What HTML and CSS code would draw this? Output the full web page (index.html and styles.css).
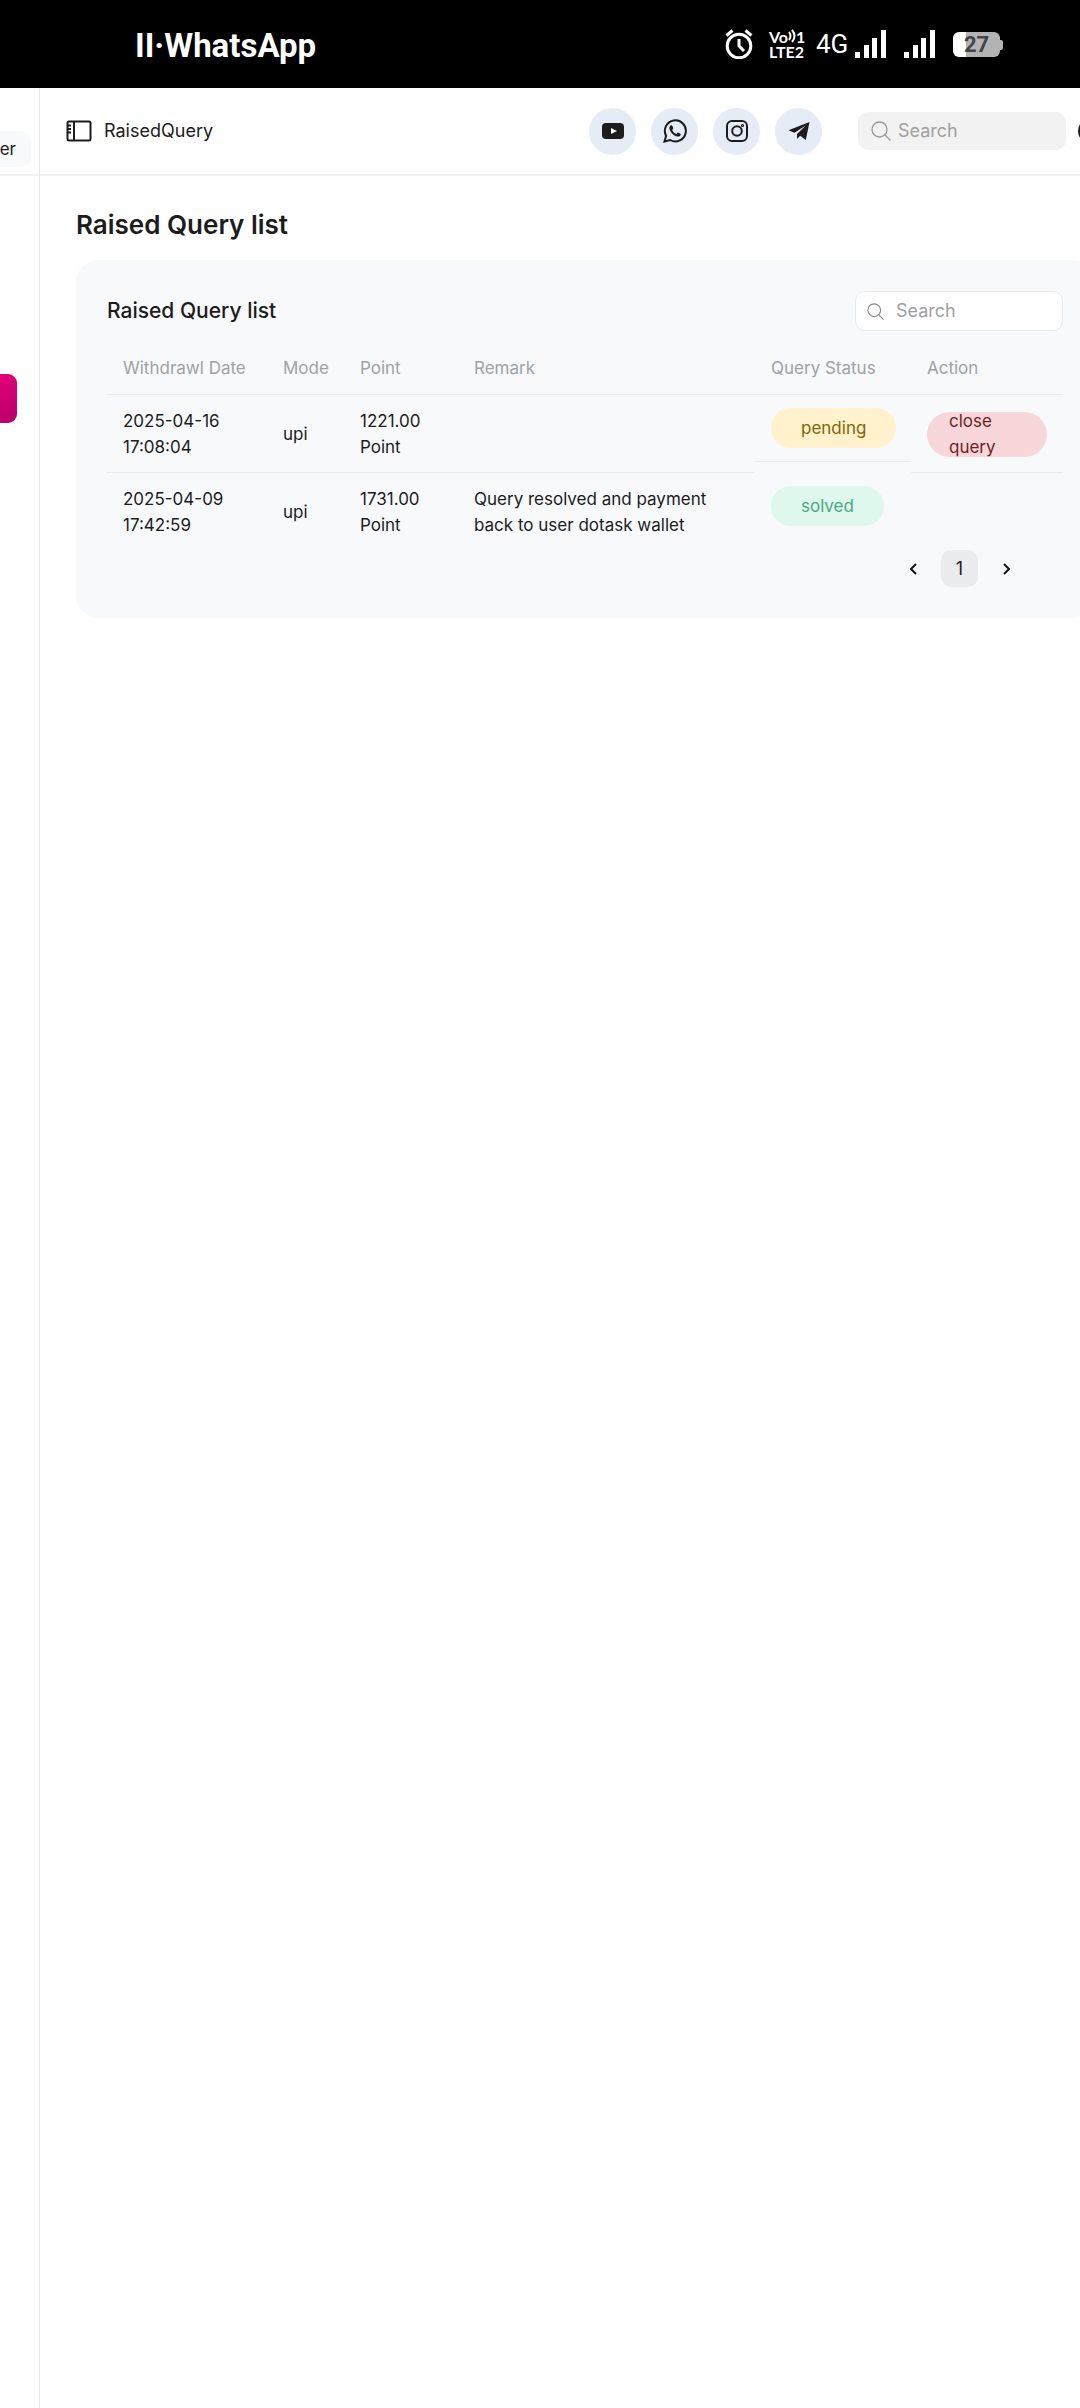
FILE: index.html
```html
<!DOCTYPE html>
<html lang="en">
<head>
<meta charset="utf-8">
<title>RaisedQuery</title>
<meta name="viewport" content="width=device-width, initial-scale=1">
<link rel="stylesheet" href="styles.css">
</head>
<body>
<div class="statusbar">
  <span class="carrier">II·WhatsApp</span>
  <div class="indicators">
    <svg class="alarm" viewBox="0 0 28 30" width="28" height="30" fill="none" stroke="#fff" stroke-width="3"><circle cx="14" cy="17" r="11.8"/><path d="M14 10v7l5 5M1.500 6.500l6-5M26.500 6.500l-6-5"/></svg>
    <div class="volte">
      <div class="volte-row"><span>Vo</span><svg viewBox="0 0 8 14" width="8" height="14" fill="none" stroke="#fff" stroke-width="2"><path d="M1 3q3 4 0 8M4 1q5 6 0 12"/></svg><span>1</span></div>
      <div class="volte-row"><span>LTE2</span></div>
    </div>
    <span class="network">4G</span>
    <svg class="signal" viewBox="0 0 32 28" width="32" height="28" fill="#fff"><path d="M0 22h5v6H0zM9 15h5v13H9zM17 8h5v20h-5zM26 0h5v28h-5z"/></svg>
    <svg class="signal second" viewBox="0 0 32 28" width="32" height="28" fill="#fff"><path d="M0 22h5v6H0zM9 15h5v13H9zM17 8h5v20h-5zM26 0h5v28h-5z"/></svg>
    <div class="battery"><span>27</span></div>
  </div>
</div>
<div class="app">
  <aside class="sidebar">
    <div class="sidebar-top"><a class="pill" href="#">Twitter</a></div>
    <a class="active-item" href="#" aria-label="Raised query"></a>
  </aside>
  <div class="main">
    <header class="topbar">
      <button class="icon-button" aria-label="Toggle sidebar"><svg viewBox="0 0 26 22" width="26" height="22" fill="none" stroke="#1c1c1c" stroke-width="2"><rect x="1.500" y="1.500" width="23" height="19" rx="1.500"/><path d="M8 1.500v19M2 5.500h3M2 9h3M2 12.500h3"/></svg></button>
      <span class="crumb">RaisedQuery</span>
      <nav class="social">
        <a href="#" aria-label="YouTube"><svg viewBox="0 0 24 24" width="24" height="24"><path fill="#1c1c1c" d="M5 4h14q4 0 4 4v8q0 4-4 4H5q-4 0-4-4V8q0-4 4-4z"/><path fill="#fff" d="M10 9l6 3-6 3z"/></svg></a>
        <a href="#" aria-label="WhatsApp"><svg viewBox="0 0 24 24" width="24" height="24"><path fill="none" stroke="#1c1c1c" stroke-width="2" d="M1.500 22.500l1.600-5.700A10.500 10.500 0 1 1 7.200 21z"/><path fill="#1c1c1c" d="M8.500 6.300c-.5-.3-1.200 0-1.600.6-2.300 3.600 3.300 10.200 7.700 10.700 1.700.1 3.300-1 3.200-2.600 0-.5-2.700-1.800-3.100-1.600l-1.300 1.500c-1.800-.6-3.600-2.200-4.200-4l1-1.400c.3-.5-.9-2.800-1.700-3.200z"/></svg></a>
        <a href="#" aria-label="Instagram"><svg viewBox="0 0 24 24" width="24" height="24" fill="none" stroke="#1c1c1c" stroke-width="2"><rect x="2" y="2" width="20" height="20" rx="5"/><circle cx="12" cy="12" r="4.800"/><circle cx="17.500" cy="6.500" r=".6"/></svg></a>
        <a href="#" aria-label="Telegram"><svg viewBox="0 0 24 24" width="24" height="24" fill="#1c1c1c"><path d="M22.500 3L1.500 11.200l6 2.500L19 6.200 10 15v5l3.200-3.300 5.600 4.300z"/></svg></a>
      </nav>
      <label class="search filled"><svg viewBox="0 0 20 20" width="20" height="20" fill="none" stroke="#999" stroke-width="1.300"><circle cx="8.500" cy="8.500" r="7.500"/><path d="M14 14l5.500 5.500"/></svg><input type="search" placeholder="Search" aria-label="Search site"></label>
      <button class="icon-button theme" aria-label="Theme"><svg viewBox="0 0 24 24" width="24" height="24" fill="none" stroke="#1c1c1c" stroke-width="2"><circle cx="12" cy="12" r="11"/></svg></button>
    </header>
    <main class="content">
      <h1>Raised Query list</h1>
      <section class="card">
        <div class="card-head">
          <h2>Raised Query list</h2>
          <label class="search outlined"><svg viewBox="0 0 20 20" width="17" height="17" fill="none" stroke="#888" stroke-width="1.300"><circle cx="8.500" cy="8.500" r="7.500"/><path d="M14 14l5.500 5.500"/></svg><input type="search" placeholder="Search" aria-label="Search queries"></label>
        </div>
        <table>
          <colgroup><col class="c-date"><col class="c-mode"><col class="c-point"><col><col class="c-status"><col class="c-action"></colgroup>
          <thead><tr><th>Withdrawl Date</th><th>Mode</th><th>Point</th><th>Remark</th><th>Query Status</th><th>Action</th></tr></thead>
          <tbody>
            <tr><td>2025-04-16 17:08:04</td><td>upi</td><td>1221.00 Point</td><td></td><td class="status"><div><span class="badge pending">pending</span></div></td><td class="action"><button class="close-query">close query</button></td></tr>
            <tr><td>2025-04-09 17:42:59</td><td>upi</td><td>1731.00 Point</td><td>Query resolved and payment back to user dotask wallet</td><td class="status"><div><span class="badge solved">solved</span></div></td><td></td></tr>
          </tbody>
        </table>
        <nav class="pager" aria-label="Pagination">
          <button aria-label="Previous page"><svg viewBox="0 0 8 12" width="8" height="12" fill="none" stroke="#111" stroke-width="2"><path d="M7 1L2 6l5 5"/></svg></button>
          <button class="current">1</button>
          <button aria-label="Next page"><svg viewBox="0 0 8 12" width="8" height="12" fill="none" stroke="#111" stroke-width="2"><path d="M1 1l5 5-5 5"/></svg></button>
        </nav>
      </section>
    </main>
  </div>
</div>
</body>
</html>
```
FILE: styles.css
```css
* { box-sizing: border-box; }
body {
  margin: 0;
  min-height: 100vh;
  display: flex;
  flex-direction: column;
  overflow-x: hidden;
  background: #fff;
  color: #1c1c1c;
  font: 17px/26px Inter, "Liberation Sans", sans-serif;
}
button, input { font: inherit; color: inherit; }
button { border: 0; background: none; padding: 0; }
a { color: inherit; text-decoration: none; }
svg { display: block; flex: none; }
h1, h2 { margin: 0; }

.statusbar {
  display: flex;
  justify-content: space-between;
  align-items: center;
  height: 88px;
  padding: 0 80px 0 135px;
  background: #000;
  color: #fff;
  font-family: Roboto, sans-serif;
}
.carrier { padding-top: 4px; font-size: 33px; line-height: 40px; font-weight: 700; }
.indicators { display: flex; align-items: center; }
.volte {
  margin: 0 11px 0 16px;
  width: 36px;
  font: 700 16px/15px Lato, sans-serif;
}
.volte-row { display: flex; justify-content: space-between; }
.network { width: 30px; margin-right: 9px; font-size: 26px; line-height: 32px; }
.second { margin-left: 17px; }
.battery {
  position: relative;
  width: 47px;
  height: 25px;
  margin-left: 17px;
  border-radius: 6px;
  background: linear-gradient(90deg, #fff 13px, #b3b3b3 13px);
  color: #444;
  font-size: 22px;
  line-height: 26px;
  font-weight: 700;
  text-align: center;
}
.battery::after {
  content: "";
  position: absolute;
  left: 100%;
  top: 8px;
  width: 3px;
  height: 10px;
  border-radius: 0 2px 2px 0;
  background: #b3b3b3;
}

.app { flex: 1; display: flex; }
.sidebar {
  flex: none;
  width: 40px;
  border-right: 1px solid #e8e8e8;
  overflow: hidden;
}
.sidebar-top {
  display: flex;
  justify-content: flex-end;
  align-items: flex-end;
  height: 88px;
  padding: 0 8px 7px 0;
  border-bottom: 2px solid #f2f2f2;
}
.pill {
  padding: 5px 15px;
  border-radius: 10px;
  background: #f7f9fb;
}
.active-item {
  display: block;
  height: 49px;
  margin: 198px 22px 0 -20px;
  border-radius: 9px;
  background: linear-gradient(165deg, #e6007a, #b8006b);
}

.main { flex: 1; min-width: 0; }
.topbar {
  display: flex;
  align-items: center;
  height: 88px;
  padding-left: 26px;
  border-bottom: 2px solid #f2f2f2;
}
.crumb { margin-left: 12px; font-size: 18px; }
.social { display: flex; gap: 15px; margin-left: auto; }
.social a {
  display: grid;
  place-items: center;
  width: 47px;
  height: 47px;
  border-radius: 50%;
  background: #e5ecf6;
}
.search { display: flex; align-items: center; border-radius: 10px; }
.search input {
  flex: 1;
  min-width: 0;
  padding: 0;
  border: 0;
  outline: 0;
  background: none;
  font-size: 18px;
}
.search input::placeholder { color: #a0a0a0; opacity: 1; }
.filled {
  width: 208px;
  height: 38px;
  margin-left: 36px;
  padding: 0 13px;
  gap: 7px;
  background: #f2f2f2;
}
.outlined {
  width: 208px;
  height: 40px;
  padding: 0 11px;
  gap: 12px;
  border: 1px solid #e9eaec;
  background: #fff;
}
.theme { flex: none; width: 24px; margin: 0 -22px 0 12px; }

.content { padding: 32px 0 32px 36px; }
h1 { font-size: 26px; line-height: 34px; font-weight: 600; }
h2 { font-size: 21px; line-height: 30px; font-weight: 500; }
.card {
  margin: 18px -14px 0 0;
  padding: 31px;
  border-radius: 22px;
  background: #f7f9fb;
}
.card-head {
  display: flex;
  justify-content: space-between;
  align-items: center;
}
table {
  width: 100%;
  margin-top: 11px;
  table-layout: fixed;
  border-collapse: collapse;
}
.c-date { width: 160px; }
.c-mode { width: 77px; }
.c-point { width: 114px; }
.c-status { width: 156px; }
.c-action { width: 152px; }
th {
  padding: 13px 16px;
  border-bottom: 1px solid #e9ebed;
  color: #a1a2a4;
  font-weight: 400;
  text-align: left;
  white-space: nowrap;
}
td { padding: 13px 16px 12px; border-bottom: 1px solid #e9ebed; }
tr:last-child td { border-bottom: 0; }
td.status { padding: 0; border-bottom: 0; vertical-align: top; }
.status div { padding: 13px 16px; border-bottom: 1px solid #e9ebed; }
tr:last-child .status div { padding-bottom: 0; border: 0; }
.badge {
  display: block;
  width: fit-content;
  padding: 7px 30px;
  border-radius: 20px;
}
.pending { background: #fff2cd; color: #856404; }
.solved { background: #def8ee; color: #4aa785; }
.close-query {
  display: flex;
  align-items: center;
  width: 120px;
  height: 45px;
  padding: 0 45px 0 22px;
  border-radius: 23px;
  background: #f7d7da;
  color: #721c24;
  text-align: left;
}
.pager {
  display: flex;
  justify-content: flex-end;
  align-items: center;
  gap: 10px;
  padding-right: 38px;
}
.pager button {
  display: grid;
  place-items: center;
  width: 37px;
  height: 37px;
  border-radius: 10px;
  font-size: 18px;
}
.pager .current { background: #ebecee; }
```
